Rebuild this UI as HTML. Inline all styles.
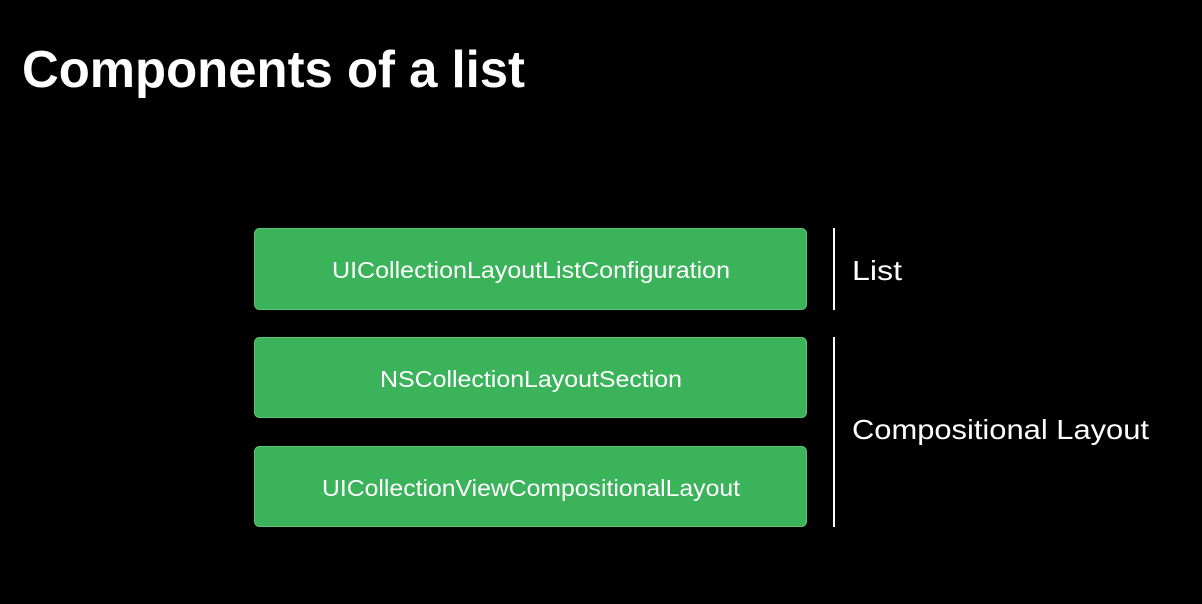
<!DOCTYPE html>
<html><head><meta charset="utf-8"><style>
html,body{margin:0;padding:0;background:#000;width:1202px;height:604px;overflow:hidden}
</style></head><body>
<svg width="1202" height="604" xmlns="http://www.w3.org/2000/svg" style="display:block;font-family:'Liberation Sans',sans-serif">
<rect width="1202" height="604" fill="#000"/>
<text x="22" y="87" fill="#fff" font-weight="bold" font-size="52" textLength="503" lengthAdjust="spacingAndGlyphs">Components of a list</text>
<g fill="#3bb35a" stroke="#5cc476" stroke-width="1">
<rect x="254.5" y="228.5" width="552" height="81" rx="5"/>
<rect x="254.5" y="337.5" width="552" height="80" rx="5"/>
<rect x="254.5" y="446.5" width="552" height="80" rx="5"/>
</g>
<g fill="#fff" font-size="23" text-anchor="middle">
<text x="531" y="278" textLength="398" lengthAdjust="spacingAndGlyphs">UICollectionLayoutListConfiguration</text>
<text x="531" y="387" textLength="302" lengthAdjust="spacingAndGlyphs">NSCollectionLayoutSection</text>
<text x="531" y="496" textLength="418" lengthAdjust="spacingAndGlyphs">UICollectionViewCompositionalLayout</text>
</g>
<rect x="833" y="228" width="2" height="82" fill="#fff"/>
<rect x="833" y="337" width="2" height="190" fill="#fff"/>
<g fill="#fff" font-size="28">
<text x="852" y="280" textLength="50" lengthAdjust="spacingAndGlyphs">List</text>
<text x="852" y="439" textLength="297" lengthAdjust="spacingAndGlyphs">Compositional Layout</text>
</g>
</svg>
</body></html>
